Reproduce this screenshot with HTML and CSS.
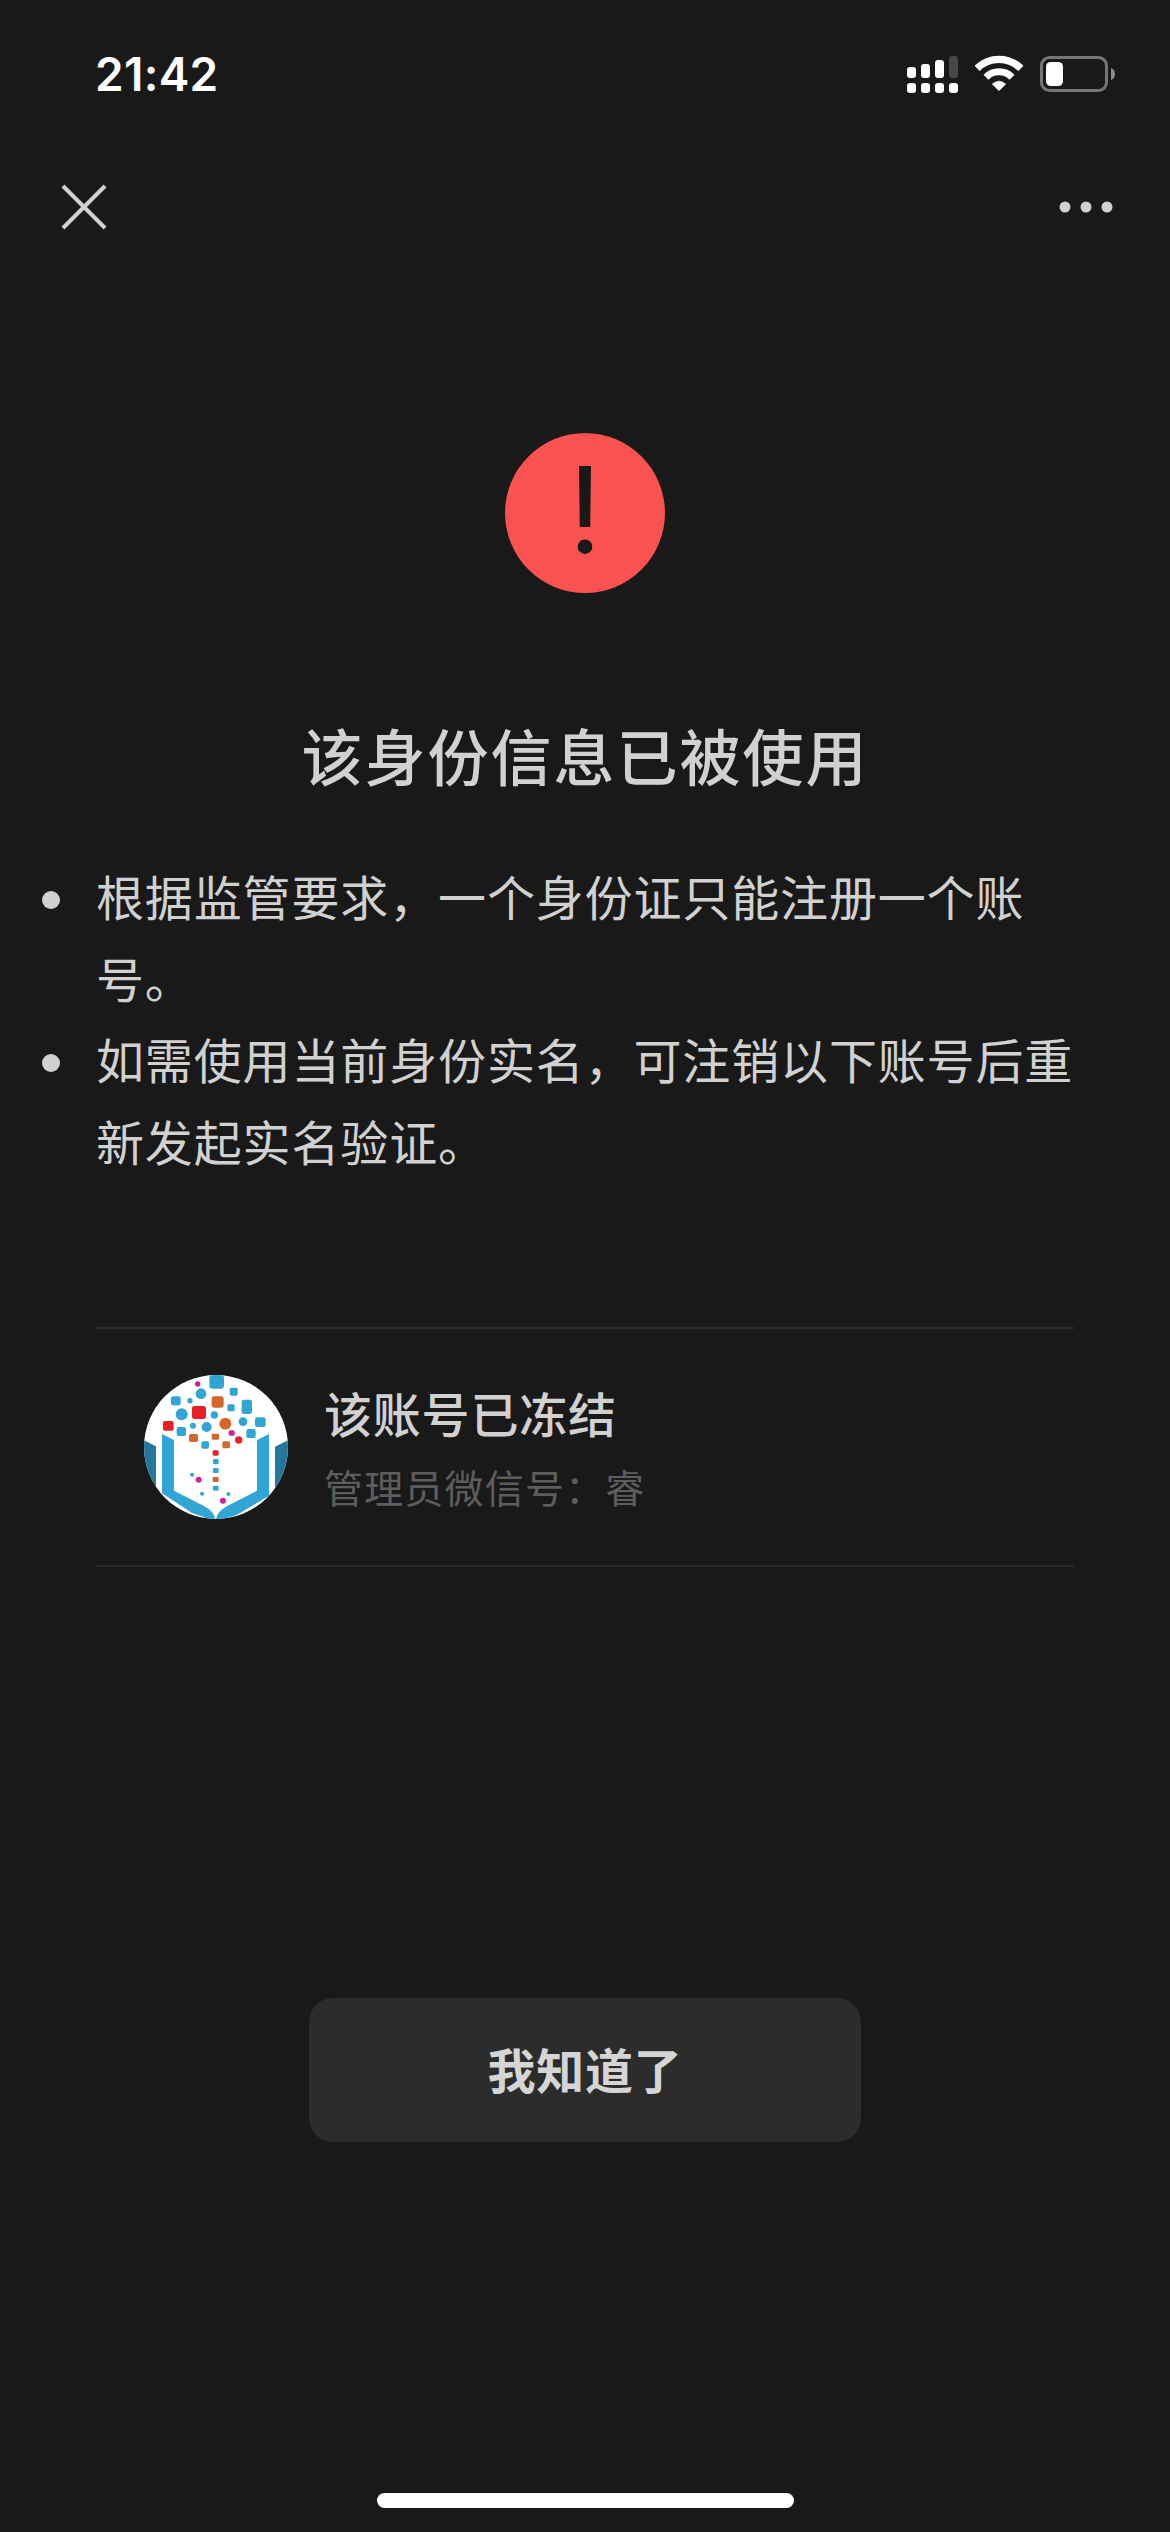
FILE: index.html
```html
<!DOCTYPE html>
<html lang="zh-CN">
<head>
<meta charset="utf-8">
<title>该身份信息已被使用</title>
<link rel="stylesheet" href="styles.css">
</head>
<body>
<div class="screen">
  <header class="status-bar">
    <span class="time">21:42</span>
    <div class="indicators">
      <svg width="51" height="38" viewBox="81 75 153 114" fill="#fff">
        <rect x="81" y="111" width="27" height="33" rx="9"/>
        <rect x="123" y="102" width="27" height="42" rx="9"/>
        <rect x="165" y="90" width="27" height="54" rx="9"/>
        <rect x="207" y="78" width="27" height="66" rx="9" fill="#474747"/>
        <rect x="81" y="159" width="27" height="30" rx="9"/>
        <rect x="123" y="159" width="27" height="30" rx="9"/>
        <rect x="165" y="159" width="27" height="30" rx="9"/>
        <rect x="207" y="159" width="27" height="30" rx="9"/>
      </svg>
      <svg class="wifi" width="48" height="38" viewBox="285 75 144 114" fill="none" stroke="#fff">
        <path d="M291.2 115.2A93 93 0 0 1 422.8 115.2" stroke-width="22"/>
        <path d="M317.8 141.8A55.5 55.5 0 0 1 396.2 141.8" stroke-width="21"/>
        <path d="M357 182L337 162Q357 145 377 162Z" fill="#fff" stroke-width="2" stroke-linejoin="round"/>
      </svg>
      <svg width="75" height="38" viewBox="480 75 225 114">
        <rect x="484.5" y="82.500" width="195" height="99" rx="24" fill="none" stroke="#757575" stroke-width="9"/>
        <rect x="498" y="96" width="51" height="72" rx="14" fill="#fff"/>
        <path d="M693 114Q705 119 705 132T693 150Z" fill="#8c8c8c"/>
      </svg>
    </div>
  </header>

  <nav class="nav-bar">
    <svg width="46" height="46" viewBox="0 0 46 46" stroke="#d1d1d1" stroke-width="4"><path d="M2 2L44 44M44 2L2 44"/></svg>
    <svg width="54" height="12" viewBox="0 0 54 12" fill="#d1d1d1"><circle cx="6" cy="6" r="5.500"/><circle cx="27" cy="6" r="5.500"/><circle cx="48" cy="6" r="5.500"/></svg>
  </nav>

  <main class="content">
    <svg class="warn" width="160" height="160" viewBox="0 0 160 160">
      <circle cx="80" cy="80" r="80" fill="#fa5151"/>
      <path d="M74 33H86L85.200 94H74.800Z" fill="#191919"/>
      <circle cx="80" cy="113.700" r="7.300" fill="#191919"/>
    </svg>
    <h1 class="title">该身份信息已被使用</h1>
    <ul class="reasons">
      <li>根据监管要求，一个身份证只能注册一个账<br>号。</li>
      <li>如需使用当前身份实名，可注销以下账号后重<br>新发起实名验证。</li>
    </ul>
    <section class="account">
      <svg class="avatar" width="144" height="144" viewBox="27 30 432 432">
        <rect x="27" y="30" width="432" height="432" fill="#fff"/>
        <g fill="#24789b">
          <path d="M27 226L63 244V380H27Z"/><path d="M459 226L420 245V380H459Z"/>
        </g>
        <g fill="#31a5d4">
          <path d="M81 207L117 225V377L207 423Q237 439 241 462H220Q205 455 170 443L81 385Z"/>
          <path d="M402 207L366 225V377L277 423Q247 439 243 462H264Q280 458 305 450L402 392Z"/>
          <rect x="223" y="30" width="44" height="41" rx="9"/>
          <rect x="284" y="68" width="24" height="24" rx="5"/>
          <rect x="108" y="94" width="29" height="27" rx="6"/>
          <rect x="320" y="104" width="31" height="43" rx="7"/>
          <rect x="277" y="118" width="22" height="21" rx="5"/>
          <rect x="360" y="157" width="32" height="29" rx="7"/>
          <rect x="125" y="186" width="28" height="27" rx="6"/>
          <rect x="334" y="192" width="28" height="27" rx="6"/>
          <rect x="199" y="229" width="23" height="22" rx="5"/>
          <circle cx="198" cy="86" r="16"/><circle cx="165" cy="107" r="8"/>
          <circle cx="140" cy="148" r="18"/><circle cx="238" cy="150" r="11"/>
          <circle cx="174" cy="182" r="9"/><circle cx="215" cy="186" r="15"/>
          <circle cx="324" cy="170" r="13"/>
          <rect x="234" y="282" width="17" height="16" rx="4"/>
          <rect x="234" y="309" width="17" height="15" rx="4"/>
          <rect x="234" y="362" width="17" height="15" rx="4"/>
          <circle cx="171" cy="329" r="6"/><circle cx="201" cy="386" r="6"/><circle cx="280" cy="387" r="6"/>
        </g>
        <g fill="#d4672b">
          <rect x="230" y="94" width="36" height="34" rx="7"/>
          <circle cx="271" cy="176" r="18"/>
          <rect x="162" y="207" width="27" height="24" rx="5"/>
          <rect x="230" y="206" width="22" height="18" rx="4"/>
          <rect x="262" y="229" width="23" height="21" rx="5"/>
          <rect x="233" y="336" width="18" height="15" rx="4"/>
        </g>
        <g fill="#e81f28">
          <rect x="171" y="123" width="42" height="39" rx="8"/>
          <rect x="84" y="168" width="32" height="29" rx="6"/>
          <circle cx="311" cy="225" r="11"/>
          <rect x="233" y="256" width="18" height="16" rx="4"/>
        </g>
        <g fill="#cf2297">
          <circle cx="188" cy="57" r="8"/><rect x="281" y="196" width="18" height="16" rx="5"/>
          <circle cx="191" cy="344" r="9"/><circle cx="264" cy="407" r="9"/>
        </g>
      </svg>
      <div class="account-text">
        <div class="account-name">该账号已冻结</div>
        <div class="account-owner">管理员微信号：睿</div>
      </div>
    </section>
    <button class="confirm" type="button">我知道了</button>
  </main>
  <div class="home-indicator"></div>
</div>
</body>
</html>
```
FILE: styles.css
```css
* { box-sizing: border-box; }

body {
  margin: 0;
  background: #191919;
  color: #d1d1d1;
  font-family: "Noto Sans CJK SC", sans-serif;
}

svg { display: block; flex: none; }

.screen {
  display: flex;
  flex-direction: column;
  align-items: stretch;
  width: 1170px;
  height: 2532px;
  padding-bottom: 24px;
  overflow: hidden;
}

.status-bar {
  display: flex;
  justify-content: space-between;
  align-items: center;
  flex: none;
  height: 148px;
  padding: 0 55px 0 95px;
}

.time {
  color: #fff;
  font: 600 46px/60px Inter, sans-serif;
  letter-spacing: 0.3px;
}

.indicators { display: flex; gap: 17px; }

.nav-bar {
  display: flex;
  justify-content: space-between;
  align-items: center;
  flex: none;
  height: 118px;
  padding: 0 57px 0 61px;
}

.content {
  display: flex;
  flex-direction: column;
  align-items: center;
  flex: 1;
  padding-top: 167px;
}

.title {
  margin: 117px 0 0;
  font-size: 61px;
  font-weight: 500;
  line-height: 90px;
  letter-spacing: 2px;
  white-space: nowrap;
}

.reasons {
  align-self: stretch;
  margin: 55px 0 0;
  padding: 0 0 0 42px;
  list-style: none;
  font-size: 48px;
  line-height: 81.6px;
  letter-spacing: 0.86px;
  white-space: nowrap;
}

.reasons li { display: flex; gap: 36px; }

.reasons li::before {
  content: "";
  flex: none;
  width: 18px;
  height: 18px;
  margin-top: 36px;
  border-radius: 50%;
  background: #d1d1d1;
}

.account {
  display: flex;
  align-items: center;
  gap: 36px;
  width: 978px;
  height: 240px;
  margin-top: 146px;
  padding-left: 48px;
  border-top: 2px solid #2a2a2a;
  border-bottom: 2px solid #2a2a2a;
}

.avatar { border-radius: 50%; }

.account-text { padding-bottom: 3px; }

.account-name {
  font-size: 48px;
  font-weight: 500;
  line-height: 72px;
  letter-spacing: 0.8px;
}

.account-owner {
  margin-top: 8px;
  color: #5d5d5d;
  font-size: 39px;
  line-height: 60px;
  letter-spacing: 1.18px;
}

.confirm {
  width: 552px;
  height: 144px;
  margin-top: 431px;
  padding: 0 0 4px;
  border: 0;
  border-radius: 24px;
  background: #2c2c2c;
  color: #d5d5d5;
  font: 700 48px/72px "Noto Sans CJK SC", sans-serif;
  letter-spacing: 0.8px;
}

.home-indicator {
  flex: none;
  align-self: center;
  width: 417px;
  height: 15px;
  border-radius: 8px;
  background: #fff;
}
```
